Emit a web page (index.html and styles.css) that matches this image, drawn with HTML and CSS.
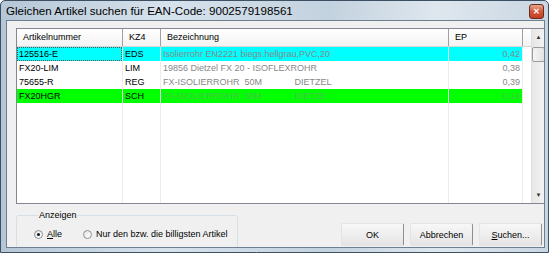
FILE: index.html
```html
<!DOCTYPE html>
<html>
<head>
	<title>Gleichen Artikel suchen</title>
	<meta charset="utf-8">
	<link rel="stylesheet" href="styles.css">
</head>
<body>
  <div class="window">
  	<div class="titlebar">
  		<span class="title">Gleichen Artikel suchen für EAN-Code: 9002579198561</span>
  		<span class="close">&#x2715;</span>
  	</div>
  	<div class="client">
  		<div class="grid">
  			<div class="table">
  				<div class="row head">
  					<div class="cell">Artikelnummer</div>
  					<div class="cell">KZ4</div>
  					<div class="cell">Bezeichnung</div>
  					<div class="cell">EP</div>
  					<div class="cell"></div>
  				</div>
  				<div class="row cyan">
  					<div class="cell"><span class="focus">125516-E</span></div>
  					<div class="cell">EDS</div>
  					<div class="cell grey">Isolierrohr EN2221 biegs.hellgrau,PVC,20</div>
  					<div class="cell grey num">0,42</div>
  					<div class="cell empty"></div>
  				</div>
  				<div class="row">
  					<div class="cell">FX20-LIM</div>
  					<div class="cell">LIM</div>
  					<div class="cell grey">19856 Dietzel FX 20 - ISOFLEXROHR</div>
  					<div class="cell grey num">0,38</div>
  					<div class="cell empty"></div>
  				</div>
  				<div class="row">
  					<div class="cell">75655-R</div>
  					<div class="cell">REG</div>
  					<div class="cell grey pre">FX-ISOLIERROHR  50M             DIETZEL</div>
  					<div class="cell grey num">0,39</div>
  					<div class="cell empty"></div>
  				</div>
  				<div class="row green">
  					<div class="cell">FX20HGR</div>
  					<div class="cell">SCH</div>
  					<div class="cell grey pre">FX-ISOLIERROHR  50M             DIETZE</div>
  					<div class="cell grey num">0,14</div>
  					<div class="cell empty"></div>
  				</div>
  				<div class="row filler">
  					<div class="cell"></div>
  					<div class="cell"></div>
  					<div class="cell"></div>
  					<div class="cell"></div>
  					<div class="cell empty"></div>
  				</div>
  			</div>
  			<div class="scrollbar">
  				<div class="arrow">&#x25B2;</div>
  				<div class="thumb"></div>
  				<div class="track"></div>
  				<div class="arrow">&#x25BC;</div>
  			</div>
  		</div>
  		<div class="bottom">
  			<fieldset class="group">
  				<legend>Anzeigen</legend>
  				<label class="radio"><span class="dot checked"></span><span><u>A</u>lle</span></label>
  				<label class="radio"><span class="dot"></span><span>Nur den bzw. die billigsten Artikel</span></label>
  			</fieldset>
  			<div class="buttons">
  				<button>OK</button>
  				<button>Abbrechen</button>
  				<button><u>S</u>uchen...</button>
  			</div>
  		</div>
  	</div>
  </div>
</body>
</html>
```

FILE: styles.css
```css
body {
	margin: 0;
	font-family: "Liberation Sans", Arial, sans-serif;
	font-size: 9px;
	color: #000;
}
.window {
	width: 549px;
	height: 253px;
	box-sizing: border-box;
	border: 1px solid #3c4f63;
	border-radius: 5px 5px 0 0;
	background: linear-gradient(90deg, #b5c6d6 0%, #d6e2ec 30%, #c3d2df 60%, #dfe7ee 80%, #c9d6e2 100%);
	display: flex;
	flex-direction: column;
	overflow: hidden;
}
.titlebar {
	height: 19px;
	display: flex;
	align-items: center;
	justify-content: space-between;
	padding: 0 4px 0 5px;
}
.title {
	font-size: 11.6px;
	color: #000;
}
.close {
	width: 13px;
	height: 13px;
	margin-top: 2px;
	border: 1px solid #6b2c22;
	border-radius: 3px;
	background: linear-gradient(#e9a58c, #d5573a 50%, #c13d22);
	color: #fff;
	font-size: 8px;
	font-weight: bold;
	display: flex;
	align-items: center;
	justify-content: center;
}
.client {
	flex: 1;
	margin: 0 3px 4px 5px;
	background: #f0f0f0;
	border: 1px solid #6d7f91;
	padding: 7px 0 0 9px;
	overflow: hidden;
	display: flex;
	flex-direction: column;
}
.grid {
	height: 176px;
	flex-shrink: 0;
	box-sizing: border-box;
	border: 1px solid #828790;
	border-right: none;
	background: #fff;
	display: flex;
}
.table {
	flex: 1;
	display: flex;
	flex-direction: column;
}
.row {
	display: grid;
	grid-template-columns: 106px 38px 288px 74px 1fr;
	height: 14px;
	align-items: stretch;
}
.row .cell {
	border-right: 1px solid #ececec;
	padding: 0 2px;
	line-height: 14px;
	white-space: nowrap;
	overflow: hidden;
}
.row .cell.pre {
	white-space: pre;
}
.row .cell.empty {
	border-right: none;
	background: #fff;
}
.head {
	height: 17px;
	background: linear-gradient(#fff, #f3f3f3);
	border-bottom: 1px solid #d5d5d5;
}
.head .cell {
	line-height: 16px;
	padding-left: 6px;
	border-right: 1px solid #a0a0a0;
}
.head .cell:nth-child(5) {
	border-right: none;
}
.cyan {
	background: #00ffff;
}
.green {
	background: #00ff00;
}
.grey {
	color: #888;
}
.green .grey {
	color: #4cc44c;
}
.num {
	text-align: right;
}
.focus {
	display: block;
	margin: 0 -2px;
	padding: 0 1px;
	height: 12px;
	line-height: 12px;
	border: 1px dotted #555;
}
.filler {
	flex: 1;
}
.scrollbar {
	width: 17px;
	background: linear-gradient(90deg, #e6e6e6, #f4f4f4);
	border-left: 1px solid #e0e0e0;
	display: flex;
	flex-direction: column;
	align-items: center;
}
.arrow {
	height: 16px;
	line-height: 16px;
	font-size: 6px;
	color: #333;
}
.thumb {
	width: 13px;
	height: 15px;
	margin-top: 2px;
	box-sizing: border-box;
	border: 1px solid #9a9a9a;
	border-radius: 2px;
	background: linear-gradient(90deg, #f4f4f4, #e3e3e3);
}
.track {
	flex: 1;
}
.bottom {
	display: flex;
	justify-content: space-between;
	align-items: flex-start;
	margin-top: 6px;
}
.group {
	width: 222px;
	height: 50px;
	flex-shrink: 0;
	box-sizing: border-box;
	margin: 0;
	padding: 7px 0 0 17px;
	border: 1px solid #d5dfe5;
	border-radius: 3px;
	display: flex;
	align-items: flex-start;
	gap: 21px;
}
.group legend {
	padding: 0 1px;
	margin-left: 4px;
}
.radio {
	display: flex;
	align-items: center;
	gap: 4px;
	height: 14px;
}
.dot {
	width: 9px;
	height: 9px;
	box-sizing: border-box;
	border: 1px solid #8c8f94;
	border-radius: 50%;
	background: linear-gradient(135deg, #e5e5e5, #fff);
	display: flex;
	align-items: center;
	justify-content: center;
}
.dot.checked::after {
	content: "";
	width: 3px;
	height: 3px;
	border-radius: 50%;
	background: #1a1a1a;
}
.buttons {
	display: flex;
	gap: 6px;
	margin: 13px 2px 0 0;
}
.buttons button {
	width: 63px;
	height: 23px;
	font-family: inherit;
	font-size: 9px;
	color: #000;
	border: 1px solid #e4e4e4;
	border-right-color: #8f8f8f;
	border-radius: 2px;
	background: linear-gradient(#f7f7f7, #eeeeee 50%, #e4e4e4);
	padding: 0;
}
```
